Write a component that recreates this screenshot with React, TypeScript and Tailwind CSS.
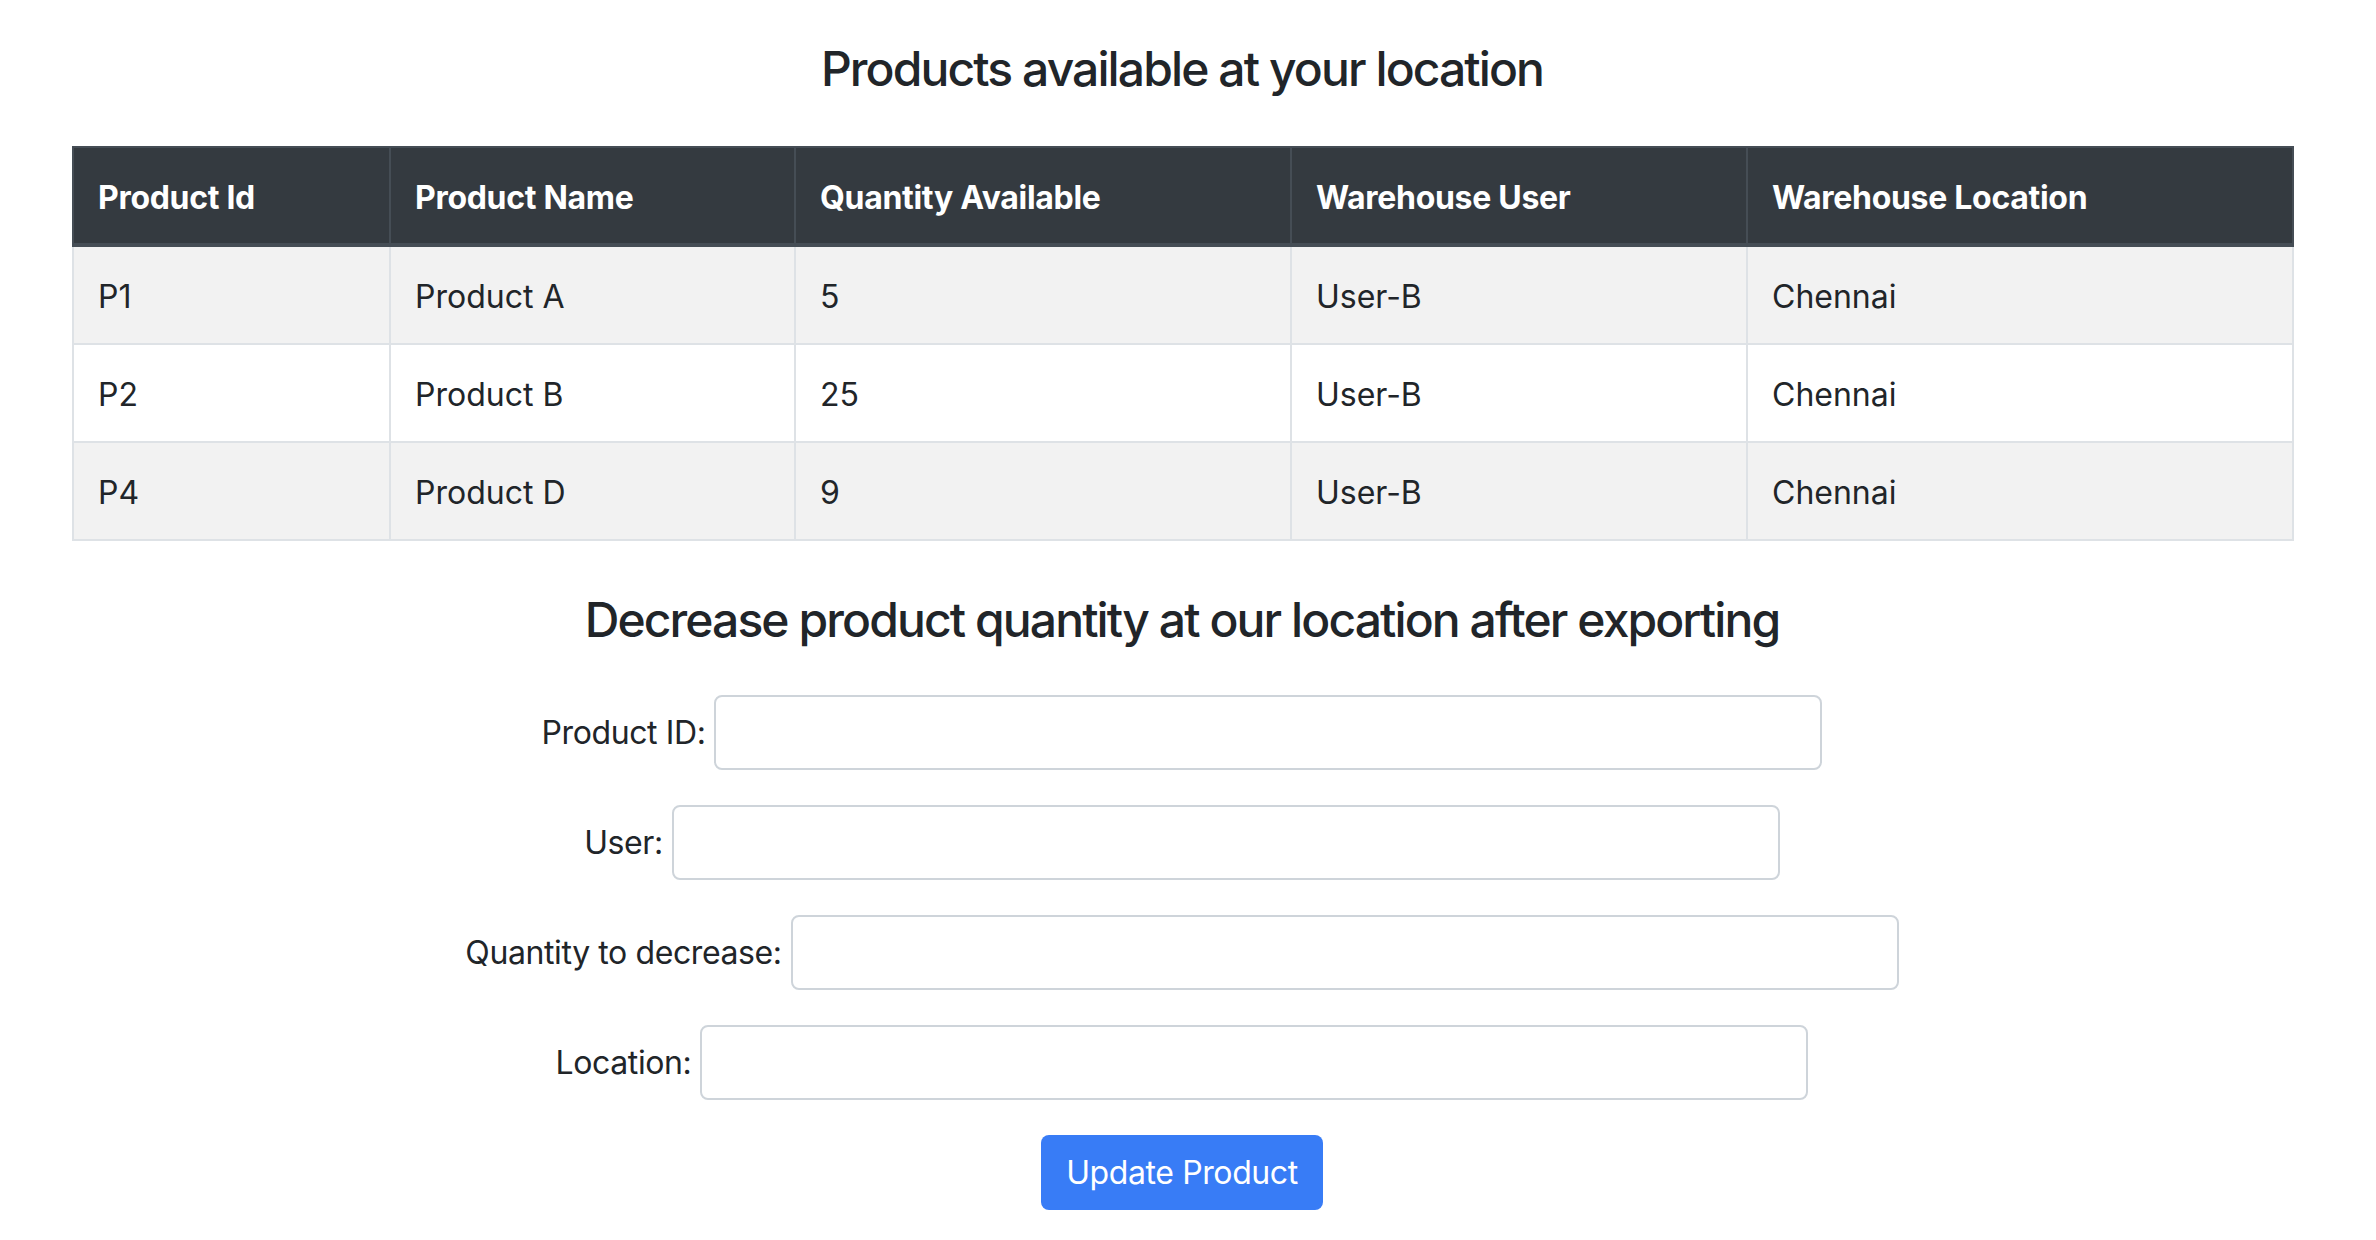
import React from "react";

const rows = [
  { id: "P1", name: "Product A", qty: "5", user: "User-B", loc: "Chennai" },
  { id: "P2", name: "Product B", qty: "25", user: "User-B", loc: "Chennai" },
  { id: "P4", name: "Product D", qty: "9", user: "User-B", loc: "Chennai" },
];

const headers = ["Product Id", "Product Name", "Quantity Available", "Warehouse User", "Warehouse Location"];

const fields = ["Product ID:", "User:", "Quantity to decrease:", "Location:"];

export default function App() {
  return (
    <div
      className="w-[2364px] min-h-[1240px] bg-white text-[#212529] pt-[40px] flex flex-col"
      style={{ fontFamily: "Inter, 'Noto Sans', sans-serif" }}
    >
      <h2 className="text-[48px] leading-[58px] font-medium text-center tracking-[-1.9px]">
        Products available at your location
      </h2>

      <table className="mt-[48px] mx-[72px] w-[2220px] table-fixed border-collapse text-[32px] leading-[48px]">
        <colgroup>
          <col className="w-[317px]" />
          <col className="w-[405px]" />
          <col className="w-[496px]" />
          <col className="w-[456px]" />
          <col className="w-[546px]" />
        </colgroup>
        <thead>
          <tr className="bg-[#343a40] text-white">
            {headers.map((h) => (
              <th
                key={h}
                className="text-left font-bold px-[24px] pt-[26px] pb-[21px] border-2 border-b-4 border-[#454d55] tracking-[-0.3px]"
              >
                {h}
              </th>
            ))}
          </tr>
        </thead>
        <tbody>
          {rows.map((r, i) => (
            <tr key={r.id} className={i % 2 === 0 ? "bg-[#f2f2f2]" : "bg-white"}>
              {[r.id, r.name, r.qty, r.user, r.loc].map((c, j) => (
                <td key={j} className="px-[24px] pt-[26px] pb-[22px] border-2 border-[#dee2e6]">
                  {c}
                </td>
              ))}
            </tr>
          ))}
        </tbody>
      </table>

      <h2 className="mt-[50px] text-[48px] leading-[58px] font-medium text-center tracking-[-1.9px]">
        Decrease product quantity at our location after exporting
      </h2>

      <div className="mt-[46px] flex flex-col items-center gap-[35px]">
        {fields.map((f) => (
          <div key={f} className="flex items-center justify-center gap-[9px]">
            <label className="text-[32px] leading-[48px] tracking-[-0.4px]">{f}</label>
            <input
              type="text"
              className="w-[1108px] h-[75px] border-2 border-[#ced4da] rounded-[8px] bg-white px-[24px] text-[32px] outline-none"
            />
          </div>
        ))}
        <button className="h-[75px] px-[25px] rounded-[8px] bg-[#387cf6] text-white text-[32px] leading-[48px] tracking-[-0.4px]">
          Update Product
        </button>
      </div>
    </div>
  );
}
